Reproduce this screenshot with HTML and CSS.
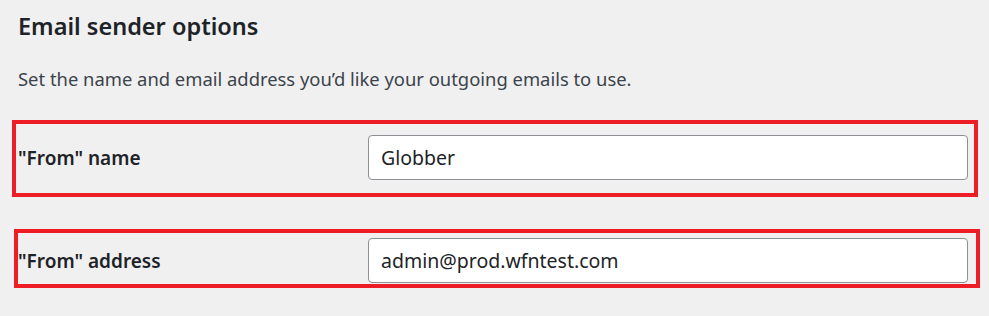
FILE: index.html
```html
<!DOCTYPE html>
<html lang="en">
<head>
    <meta charset="UTF-8">
    <meta name="viewport" content="width=device-width, initial-scale=1.0">
    <title>Email sender options</title>
    <link rel="stylesheet" href="styles.css">
</head>
<body>

<section class="options">
    <h2>Email sender options</h2>
    <p class="desc">Set the name and email address you’d like your outgoing emails to use.</p>

    <div class="field field-name">
        <label for="from-name">"From" name</label>
        <input type="text" id="from-name" value="Globber">
    </div>

    <div class="field field-address">
        <label for="from-address">"From" address</label>
        <input type="text" id="from-address" value="admin@prod.wfntest.com">
    </div>
</section>

</body>
</html>
```

FILE: styles.css
```css
body { margin: 0; padding: 0; background-color: #f0f0f1; font-family: "Noto Sans", "Open Sans", sans-serif; color: #1d2327; }
.options { padding: 11px 0 0 18px; }
.options h2 { margin: 0; font-size: 23.5px; font-weight: 600; line-height: 30px; color: #1d2327; }
.desc { margin: 26px 0 0 0; font-size: 18.4px; line-height: 24px; color: #3c434a; }
.field { display: flex; align-items: center; box-sizing: border-box; width: 966px; border: 4px solid #ee1c25; }
.field label { width: 350px; font-size: 19px; font-weight: 600; color: #1d2327; }
.field input { box-sizing: border-box; width: 600px; height: 45px; margin: 0; padding: 0 12px; border: 1px solid #8c8f94; border-radius: 4px; background: #fff; font-family: inherit; font-size: 19.5px; color: #1d2327; }
.field-name { margin: 29px 0 0 -6px; height: 77px; padding: 0 0 2px 2px; }
.field-address { margin: 32px 0 0 -4px; height: 59px; padding: 5px 0 1px 0; }
```
